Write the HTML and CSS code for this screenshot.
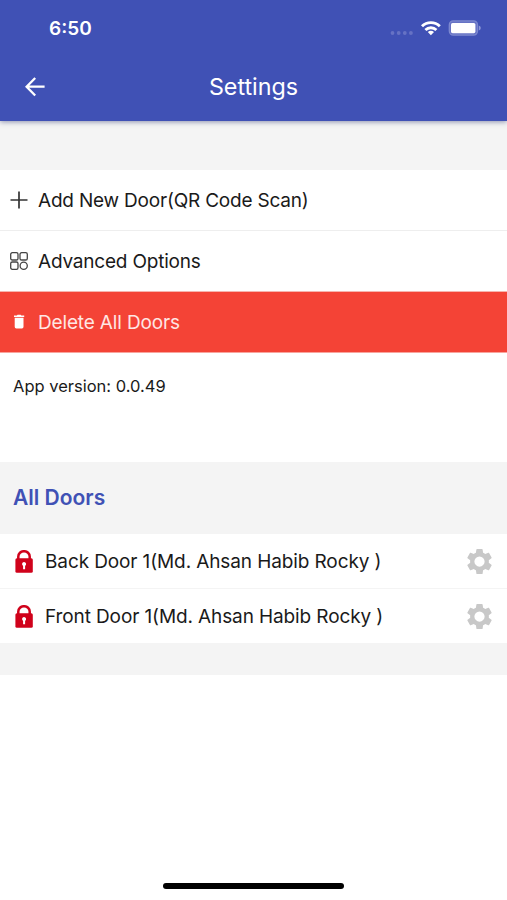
FILE: index.html
```html
<!DOCTYPE html>
<html lang="en">
<head>
<meta charset="utf-8">
<title>Settings</title>
<link rel="stylesheet" href="styles.css">
</head>
<body>
<svg class="sprites" aria-hidden="true">
  <symbol id="lock" viewBox="0 0 18 23">
    <path d="M3.3 10V6.6a5.7 5.4 0 0 1 11.4 0V10" fill="none" stroke="#d0021b" stroke-width="2.5"/>
    <rect x=".4" y="8.3" width="17.4" height="14.4" rx="1.5" fill="#d0021b"/>
    <path d="M9 12a2.1 2.1 0 0 1 1.1 3.9v3.3H8.1v-3.3A2.1 2.1 0 0 1 9 12z" fill="#fff"/>
  </symbol>
  <symbol id="gear" viewBox="2 2 20 20">
    <path fill="#c8c8c8" d="M19.43 12.98c.04-.32.07-.64.07-.98s-.03-.66-.07-.98l2.11-1.65c.19-.15.24-.42.12-.64l-2-3.46c-.12-.22-.39-.3-.61-.22l-2.49 1c-.52-.4-1.08-.73-1.69-.98l-.38-2.65C14.46 2.18 14.25 2 14 2h-4c-.25 0-.46.18-.49.42l-.38 2.65c-.61.25-1.17.59-1.69.98l-2.49-1c-.23-.09-.49 0-.61.22l-2 3.46c-.13.22-.07.49.12.64l2.11 1.65c-.04.32-.07.65-.07.98s.03.66.07.98l-2.11 1.65c-.19.15-.24.42-.12.64l2 3.46c.12.22.39.3.61.22l2.49-1c.52.4 1.08.73 1.69.98l.38 2.65c.03.24.24.42.49.42h4c.25 0 .46-.18.49-.42l.38-2.65c.61-.25 1.17-.59 1.69-.98l2.49 1c.23.09.49 0 .61-.22l2-3.46c.12-.22.07-.49-.12-.64l-2.11-1.65zM12 16.1a4.1 4.1 0 1 1 0-8.2 4.1 4.1 0 0 1 0 8.2z"/>
  </symbol>
</svg>
<div class="screen">
  <header class="header">
    <div class="status">
      <span class="time">6:50</span>
      <svg class="indicators" width="92" height="20" viewBox="0 0 92 20">
        <g fill="#6672c4"><circle cx="3.5" cy="15" r="1.9"/><circle cx="9.7" cy="15" r="1.9"/><circle cx="15.8" cy="15" r="1.9"/><circle cx="21.9" cy="15" r="1.9"/></g>
        <g fill="none" stroke="#fff" stroke-width="2.9"><path d="M33 8.2a12.8 12.8 0 0 1 17.8 0"/><path d="M36.4 12a8 8 0 0 1 11 0"/></g>
        <path d="M38.8 14.1a4.7 4.7 0 0 1 6.2 0l-3.1 3.1z" fill="#fff"/>
        <rect x="60.3" y="2.9" width="28.2" height="14.2" rx="4" fill="#6672c4" stroke="#7d89d0" stroke-width="1.3"/>
        <rect x="62" y="5" width="24.4" height="10.2" rx="1.6" fill="#fff"/>
        <path d="M89.8 7.6q2 .8 2 2.4t-2 2.4z" fill="#8f99d8"/>
      </svg>
    </div>
    <div class="toolbar">
      <svg class="back" width="20" height="20" viewBox="0 0 20 20"><path d="M10.2 1 1.6 9.7l8.6 8.8M1.6 9.7H19.6" fill="none" stroke="#fff" stroke-width="2.3"/></svg>
      <h1 class="title">Settings</h1>
    </div>
  </header>
  <main>
    <div class="gap"></div>
    <div class="option add">
      <svg class="option-icon" width="18" height="18" viewBox="0 0 18 18"><path d="M9 .5v17M.5 9h17" stroke="#333" stroke-width="1.7"/></svg>
      <span>Add New Door(QR Code Scan)</span>
    </div>
    <div class="option advanced">
      <svg class="option-icon" width="18" height="18" viewBox="0 0 18 18" fill="none" stroke="#444" stroke-width="1.3"><rect x=".7" y=".7" width="7.3" height="7.3" rx="1.6"/><rect x="10" y=".7" width="7.3" height="7.3" rx="1.6"/><rect x=".7" y="10" width="7.3" height="7.3" rx="1.6"/><circle cx="13.7" cy="13.7" r="3.6"/></svg>
      <span>Advanced Options</span>
    </div>
    <div class="option delete">
      <svg class="option-icon" width="18" height="18" viewBox="0 0 18 18" fill="#fff"><path d="M4 2.5h2.8l.8-.8h3l.8.8h2.8V4H4zM4.7 4.8h8.8v9a1.6 1.6 0 0 1-1.6 1.6H6.3a1.6 1.6 0 0 1-1.6-1.6z"/></svg>
      <span>Delete All Doors</span>
    </div>
    <p class="version">App version: 0.0.49</p>
    <h2 class="section">All Doors</h2>
    <div class="door">
      <svg class="lock" width="18" height="23"><use href="#lock"/></svg>
      <span class="door-name">Back Door 1(Md. Ahsan Habib Rocky )</span>
      <svg class="gear" width="25" height="25"><use href="#gear"/></svg>
    </div>
    <div class="door">
      <svg class="lock" width="18" height="23"><use href="#lock"/></svg>
      <span class="door-name">Front Door 1(Md. Ahsan Habib Rocky )</span>
      <svg class="gear" width="25" height="25"><use href="#gear"/></svg>
    </div>
    <div class="foot"></div>
  </main>
  <div class="home"></div>
</div>
</body>
</html>
```
FILE: styles.css
```css
* { box-sizing: border-box; margin: 0; }
body { background: #fff; color: #1a1a1a; font-family: Inter, "Liberation Sans", sans-serif; font-size: 19px; }
.sprites { display: none; }
.screen { height: 900px; display: flex; flex-direction: column; }
.header { position: relative; height: 121px; background: #4051b5; color: #fff; box-shadow: 0 1px 5px rgba(40, 50, 110, .5); }
.status { height: 56px; padding: 0 26px 0 49px; display: flex; align-items: center; justify-content: space-between; }
.time { font-size: 19px; font-weight: 600; }
.toolbar { height: 61px; display: grid; grid-template-columns: 1fr auto 1fr; align-items: center; padding: 0 25px; }
.title { font-size: 23.3px; font-weight: 400; line-height: 30px; }
.gap { height: 49px; background: #f4f4f4; }
.option { height: 61px; padding: 0 10px; display: flex; align-items: center; gap: 10px; border-bottom: 1px solid #eee; letter-spacing: -.2px; }
.advanced { border-bottom-color: #f6b5ae; }
.delete { background: #f44336; color: #ffe6e3; border-bottom-color: #f8a49d; letter-spacing: -.15px; }
.version { height: 109px; padding: 20px 13px; font-size: 16.5px; line-height: 26px; }
.section { height: 72px; padding: 0 13px; background: #f4f4f4; color: #4051b5; font-size: 21px; font-weight: 600; line-height: 72px; }
.door { height: 55px; padding: 0 15px; display: flex; align-items: center; border-bottom: 1px solid #f4f4f4; }
.door-name { flex: 1; padding-left: 12px; letter-spacing: -.11px; }
.foot { height: 31px; background: #f4f4f4; }
.home { width: 181px; height: 6px; margin: auto auto 11px 163px; border-radius: 3px; background: #000; }
```
